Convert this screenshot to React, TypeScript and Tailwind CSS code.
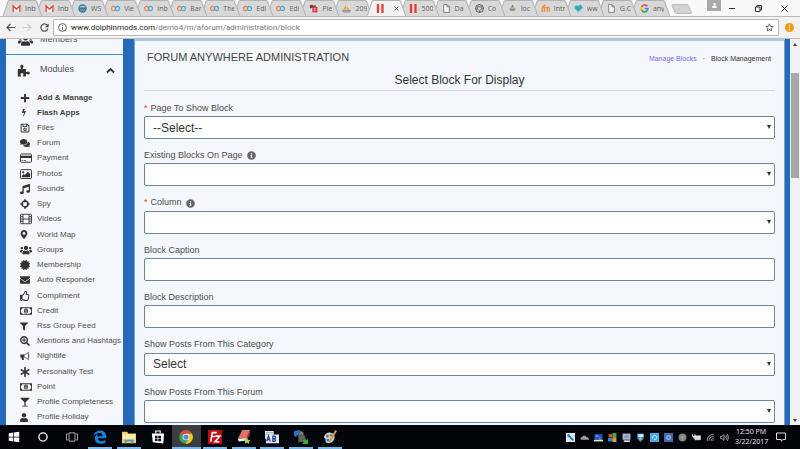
import React from "react";
import {
  FaPlus,
  FaRegSave,
  FaComments,
  FaMusic,
  FaMapMarkerAlt,
  FaUsers,
  FaCertificate,
  FaEnvelope,
  FaRegThumbsUp,
  FaFilter,
  FaSearchPlus,
  FaAsterisk,
  FaUser,
  FaInfoCircle,
} from "react-icons/fa";

type IconProps = { className?: string };

/* ---------- sidebar icons ---------- */

const Puzzle = ({ className }: IconProps) => (
  <svg viewBox="0 0 16 16" className={className} fill="currentColor" aria-hidden="true">
    <path d="M1 6h3.6c.6 0 .5-.5.2-1-.5-.8-.8-1.300-.8-2C4 1.700 4.900 1 6 1s2 .8 2 2c0 .7-.3 1.200-.7 1.900-.4.600-.4 1.100.3 1.100H11v3.300c0 .8.6.8 1.200.4.600-.4 1-.6 1.700-.6 1.200 0 1.900.9 1.900 1.900s-.8 1.900-1.900 1.900c-.7 0-1.200-.3-1.700-.6-.6-.4-1.200-.4-1.200.4V15.500H7.800c-.9 0-.7-.6-.3-1.200.3-.4.500-.8.5-1.300 0-1-.8-1.600-1.900-1.600s-1.900.6-1.900 1.600c0 .5.200.9.500 1.300.4.600.5 1.200-.4 1.200H1z" />
  </svg>
);

const Bolt = ({ className }: IconProps) => (
  <svg viewBox="0 0 1792 1792" className={className} fill="currentColor" aria-hidden="true">
    <path d="M1333 566q18 20 7 44l-540 1157q-13 25-42 25-4 0-14-2-17-5-25.500-19t-4.500-30l197-808-406 101q-4 1-12 1-18 0-31-11-18-15-13-39l201-825q4-14 16-23t28-9h328q19 0 32 12.500t13 29.500q0 8-5 18l-171 443 396-98q8-2 12-2 19 0 34 15z" />
  </svg>
);

const Card = ({ className }: IconProps) => (
  <svg viewBox="0 0 16 16" className={className} aria-hidden="true">
    <rect x="0.700" y="2.700" width="14.600" height="11" rx="1.200" fill="none" stroke="currentColor" strokeWidth="1.300" />
    <path d="M0.500 5h15v3h-15zM2 11h2v1H2zM5 11h3v1H5z" fill="currentColor" />
  </svg>
);

const Picture = ({ className }: IconProps) => (
  <svg viewBox="0 0 16 16" className={className} aria-hidden="true">
    <rect x="0.700" y="2.200" width="14.600" height="11.800" rx="1" fill="none" stroke="currentColor" strokeWidth="1.300" />
    <circle cx="4.300" cy="5.800" r="1.500" fill="currentColor" />
    <path d="M2.500 12.200v-2L5 8l1.400 1.300L10.500 5l3 3v4.200z" fill="currentColor" />
  </svg>
);

const Crosshair = ({ className }: IconProps) => (
  <svg viewBox="0 0 16 16" className={className} fill="none" stroke="currentColor" aria-hidden="true">
    <circle cx="8" cy="8" r="4.700" strokeWidth="2.400" />
    <path d="M8 .5v4.500M8 11v4.500M.5 8h4.500M11 8h4.500" strokeWidth="2.600" />
  </svg>
);

const Film = ({ className }: IconProps) => (
  <svg viewBox="0 0 16 16" className={className} fill="none" stroke="currentColor" strokeWidth="1.200" aria-hidden="true">
    <rect x="0.700" y="1.700" width="14.600" height="12.600" rx="1" />
    <path d="M4 1.700v12.600M12 1.700v12.600M4 8h8M.7 5H4M.7 8H4M.7 11H4M12 5h3.300M12 8h3.300M12 11h3.300" />
  </svg>
);

const Money = ({ className }: IconProps) => (
  <svg viewBox="0 0 16 16" className={className} aria-hidden="true">
    <path
      fill="currentColor"
      fillRule="evenodd"
      d="M0 3h16v10H0zM3 4.200A2 2 0 0 1 1.200 6v4A2 2 0 0 1 3 11.800h10A2 2 0 0 1 14.800 10V6A2 2 0 0 1 13 4.200z"
    />
    <ellipse cx="8" cy="8" rx="2.700" ry="3.200" fill="currentColor" />
    <path d="M7.200 6.900l1-.7v3.300M7 9.700h2.300" stroke="#f4f8fd" strokeWidth="0.800" fill="none" />
  </svg>
);

const Bullhorn = ({ className }: IconProps) => (
  <svg viewBox="0 0 16 16" className={className} aria-hidden="true">
    <path d="M0.500 5.500h6.700v5H5.600c-.2 1.300.6 2.200 1.200 3.200-.8 1-2.900 1-3.700.1C2.700 12.500 2.200 11.500 2.500 10.500h-2z" fill="currentColor" />
    <path d="M7.200 5.600C10 5.300 12 3.600 13.500 2.200v11.600c-1.500-1.400-3.500-3.100-6.300-3.400" fill="none" stroke="currentColor" strokeWidth="1.200" />
    <path d="M13.500 6.300c2 0 2 3.400 0 3.400" fill="currentColor" />
  </svg>
);

const Glass = ({ className }: IconProps) => (
  <svg viewBox="0 0 16 16" className={className} fill="currentColor" aria-hidden="true">
    <path d="M1 1h14v1.200L9 8.500v5.300h3.500V15h-9v-1.200H7V8.500L1 2.200z" />
  </svg>
);

const modules = [
  { name: "Add & Manage", Icon: FaPlus, bold: true },
  { name: "Flash Apps", Icon: Bolt, bold: true, narrow: true },
  { name: "Files", Icon: FaRegSave },
  { name: "Forum", Icon: FaComments },
  { name: "Payment", Icon: Card, wide: true },
  { name: "Photos", Icon: Picture, wide: true },
  { name: "Sounds", Icon: FaMusic },
  { name: "Spy", Icon: Crosshair },
  { name: "Videos", Icon: Film, wide: true },
  { name: "World Map", Icon: FaMapMarkerAlt, narrow: true },
  { name: "Groups", Icon: FaUsers, wide: true },
  { name: "Membership", Icon: FaCertificate },
  { name: "Auto Responder", Icon: FaEnvelope },
  { name: "Compliment", Icon: FaRegThumbsUp },
  { name: "Credit", Icon: Money, wide: true },
  { name: "Rss Group Feed", Icon: FaFilter, narrow: true },
  { name: "Mentions and Hashtags", Icon: FaSearchPlus },
  { name: "Nightlife", Icon: Bullhorn },
  { name: "Personality Test", Icon: FaAsterisk },
  { name: "Point", Icon: Money, wide: true },
  { name: "Profile Completeness", Icon: Glass },
  { name: "Profile Holiday", Icon: FaUser, narrow: true },
];

const fields = [
  { id: "page", label: "Page To Show Block", required: true, options: ["--Select--"] },
  { id: "existing", label: "Existing Blocks On Page", info: true, options: [""] },
  { id: "column", label: "Column", required: true, info: true, options: [""] },
  { id: "caption", label: "Block Caption" },
  { id: "description", label: "Block Description" },
  { id: "category", label: "Show Posts From This Category", options: ["Select"] },
  { id: "forum", label: "Show Posts From This Forum", options: [""] },
];

/* ---------- browser tabs ---------- */

const favicons: Record<string, React.ReactNode> = {
  gmail: (
    <>
      <path d="M1 3h14v11H1z" fill="#f5f2f1" />
      <path d="M2 14V3.500l6 5.500 6-5.500V14" fill="none" stroke="#db4437" strokeWidth="2.400" />
    </>
  ),
  wordpress: (
    <>
      <circle cx="8" cy="8" r="7.500" fill="#3f7695" />
      <path d="M2 5q6-4 12 0l-2 1H4z" fill="#a9c6d3" />
      <path d="M4 9l2 4 2-4 2 4 2-4" fill="none" stroke="#8fb5c6" />
    </>
  ),
  loops: (
    <>
      <ellipse cx="4.500" cy="8" rx="3.500" ry="3.700" fill="none" stroke="#ef8152" strokeWidth="2" />
      <ellipse cx="11.500" cy="8" rx="3.500" ry="3.700" fill="none" stroke="#45a9dc" strokeWidth="2" />
    </>
  ),
  plesk: (
    <>
      <path d="M6 5h9v10H6z" fill="#e0303c" />
      <path d="M1 3l4-2 3 2 4-1v3L7 6 2 8z" fill="#8d2d33" />
      <path d="M8 8h5M8 11h5M10 6v8" stroke="#f7c6c8" />
    </>
  ),
  boat: (
    <>
      <path d="M7 1l1 9H2zM9 4l5 7H9z" fill="#f0a03a" />
      <path d="M0 12h16M2 14h12" stroke="#6080a5" strokeWidth="1.500" />
    </>
  ),
  bars: <path d="M1.500 0h4v16h-4zM9.500 0h4v16h-4z" fill="#e93a35" />,
  file: <path d="M3 1h6l4 4v10H3zM9 1v4h4" fill="#f3f3f3" stroke="#666" strokeWidth="1.300" />,
  globe: (
    <>
      <circle cx="8" cy="8" r="7" fill="none" stroke="#4c4c4c" strokeWidth="1.600" />
      <path d="M5 5h6l1 4-4 3-4-3zM5 5L3 3M11 5l2-2M8 12v3M1 8l3 1M15 8l-3 1" fill="none" stroke="#4c4c4c" strokeWidth="1.200" />
    </>
  ),
  joomla: (
    <>
      <path d="M8 1l3 5H5zM2 8h12l-3 4H5z" fill="#777" />
      <path d="M5 9h6l-3 4z" fill="#c19a5a" />
    </>
  ),
  moodle: <path d="M2 14V8q0-2 2-2t2 2v6M6 9q0-3 2.500-3T11 9v5M11 9q0-3 2-3t2 3v5M2 5l6-3" fill="none" stroke="#ef8b37" strokeWidth="2.200" />,
  dolphin: <path d="M1 5l3-3 4 1 4-2 3 4-1 4-3 1 1 3-3-1-2 3-2-4-4-2z" fill="#35a6bd" stroke="#7fd0df" />,
  google: (
    <g fill="none" strokeWidth="2.800">
      <path d="M13 4A6 6 0 0 0 2.800 5" stroke="#ea4335" />
      <path d="M2.800 5a6 6 0 0 0 0 6" stroke="#fbbc05" />
      <path d="M2.800 11a6 6 0 0 0 9.400 1.300" stroke="#34a853" />
      <path d="M12.200 12.300A6 6 0 0 0 14 8H8.500" stroke="#4285f4" />
    </g>
  ),
};

const tabs = [
  ["gmail", "Inb"],
  ["gmail", "Inb"],
  ["wordpress", "WS"],
  ["loops", "Vie"],
  ["loops", "Inb"],
  ["loops", "Bar"],
  ["loops", "The"],
  ["loops", "Edi"],
  ["loops", "Edi"],
  ["plesk", "Ple"],
  ["boat", "209"],
  ["bars", "", "active"],
  ["bars", "500"],
  ["file", "Da"],
  ["globe", "Co"],
  ["joomla", "loc"],
  ["moodle", "Intr"],
  ["dolphin", "ww"],
  ["file", "G.C"],
  ["google", "any"],
];

const TabStrip = () => (
  <div className="flex h-4 shrink-0 bg-[#f8f8f8] pl-[3px]">
    <div className="flex min-w-0 flex-1">
      {tabs.map(([icon, title, active], i) => (
        <button
          key={i}
          aria-label={title || "Forum"}
          className="relative flex min-w-0 flex-1 items-center pl-2"
          style={{ zIndex: active ? 30 : tabs.length - i }}
        >
          <svg
            viewBox="0 0 39 16"
            preserveAspectRatio="none"
            className="absolute inset-y-0 left-0 -z-10 h-4 w-[calc(100%+6px)]"
            aria-hidden="true"
          >
            <path
              d="M0 16.500L5 1.500Q5.500.5 6.500.5H32Q33 .5 33.500 1.500L39 16.500"
              fill={active ? "#f2f2f2" : "#d8d8d8"}
              stroke="#b3b3b3"
            />
          </svg>
          <svg viewBox="0 0 16 16" className="ml-px h-[9px] w-[9px] shrink-0" aria-hidden="true">
            {favicons[icon]}
          </svg>
          {active ? (
            <svg viewBox="0 0 8 8" className="ml-[9px] h-[5px] w-[5px] shrink-0" aria-hidden="true">
              <path d="M1 1l6 6M7 1L1 7" stroke="#444" strokeWidth="1.600" />
            </svg>
          ) : (
            <span className="ml-1 truncate text-clip text-[7px] leading-none text-[#606060]">{title}</span>
          )}
        </button>
      ))}
    </div>
    <div className="flex w-[136px] shrink-0 items-start">
      <button aria-label="New tab" className="mt-1 ml-[7px] h-[10px] w-[21px]">
        <svg viewBox="0 0 21 10" className="h-full w-full">
          <path d="M1.500.5h14.500q1 0 1.500 1l3 7q.2 1-1 1H6q-1.500 0-2-1l-3-7q-.2-1 .5-1z" fill="#d2d2d2" stroke="#bcbcbc" />
        </svg>
      </button>
      <button aria-label="Profile" className="ml-[15px] flex h-[11px] w-[14px] items-center justify-center bg-[#a9a9a9] text-white">
        <FaUser className="h-[5px] w-[5px]" />
      </button>
      <div className="flex h-full flex-1 items-center justify-between pr-3 pl-2">
        <button aria-label="Minimize">
          <svg viewBox="0 0 6 6" className="h-[6px] w-[6px]">
            <path d="M0 3.500h6" stroke="#333" />
          </svg>
        </button>
        <button aria-label="Restore">
          <svg viewBox="0 0 7 7" className="h-[7px] w-[7px]" fill="none" stroke="#333">
            <path d="M.5 2h4.500v4.500H.5zM2 2V.5h4.500V5H5" />
          </svg>
        </button>
        <button aria-label="Close">
          <svg viewBox="0 0 7 7" className="h-[7px] w-[7px]">
            <path d="M.5.5l6 6M6.500.5l-6 6" stroke="#222" />
          </svg>
        </button>
      </div>
    </div>
  </div>
);

const Toolbar = () => (
  <div className="relative z-40 flex h-[23px] shrink-0 items-center border-t border-b border-t-[#b9b9b9] border-b-[#bdbdbd] bg-[#f2f2f2] pr-[6px] pl-[6px]">
    <div className="flex items-center gap-2">
      <button aria-label="Back">
        <svg viewBox="0 0 9 9" className="h-[9px] w-[9px]" fill="none" stroke="#505050" strokeWidth="1.200">
          <path d="M9 4.500H1M4.500 1L1 4.500 4.500 8" />
        </svg>
      </button>
      <button aria-label="Forward">
        <svg viewBox="0 0 9 9" className="h-[9px] w-[9px]" fill="none" stroke="#cdcdcd" strokeWidth="1.200">
          <path d="M0 4.500h8M4.500 1L8 4.500 4.500 8" />
        </svg>
      </button>
      <button aria-label="Reload">
        <svg viewBox="0 0 9 9" className="h-[9px] w-[9px]">
          <path d="M7.600 2.700A3.600 3.600 0 1 0 8 5.500" fill="none" stroke="#505050" strokeWidth="1.200" />
          <path d="M8.600.6v3.600H5z" fill="#505050" />
        </svg>
      </button>
    </div>
    <div className="ml-1 flex h-[17px] flex-1 items-center rounded-[1px] border border-[#b9b9b9] bg-white pr-1 pl-1">
      <svg viewBox="0 0 9 9" className="h-[9px] w-[9px]" aria-hidden="true">
        <circle cx="4.500" cy="4.500" r="3.900" fill="none" stroke="#5c5c5c" />
        <path d="M4.500 4v2.800M4.500 2.200v1" stroke="#5c5c5c" />
      </svg>
      <a href="#" className="ml-1 flex-1 font-[Roboto,sans-serif] text-[8px] leading-none text-[#777]">
        <span className="text-[#222]">www.dolphinmods.com</span>/demo4/m/aforum/administration/block
      </a>
      <button aria-label="Bookmark">
        <svg viewBox="0 0 16 16" className="h-[9px] w-[9px]" fill="none" stroke="#555" strokeWidth="1.600">
          <path d="M8 1.500l1.900 4.400 4.700.4-3.600 3.100 1.100 4.700L8 11.600l-4.100 2.500L5 9.400 1.400 6.300l4.700-.4z" />
        </svg>
      </button>
    </div>
    <button aria-label="Update browser" className="ml-[6px]">
      <svg viewBox="0 0 9 9" className="h-[9px] w-[9px]">
        <circle cx="4.500" cy="4.500" r="4.500" fill="#f39a0b" />
        <path d="M4.500 1.800v3.400M4.500 6v1.200" stroke="#fff" strokeWidth="1.100" />
      </svg>
    </button>
  </div>
);

const Sidebar = () => (
  <aside className="flex w-[117px] shrink-0 flex-col bg-[#f4f8fd] text-[#505050]">
    <a href="#" className="-mt-2 flex h-6 shrink-0 items-center border-b border-[#4a86cc] pb-[5px] pl-3 text-[9px]">
      <FaUsers className="h-[13px] w-[15px] text-[#333]" />
      <span className="ml-[7px]">Members</span>
    </a>
    <button className="flex h-[30px] shrink-0 items-center pr-2 pl-[11px] text-[9px]">
      <Puzzle className="h-[13px] w-[13px] text-[#333]" />
      <span className="ml-[10px] flex-1 text-left">Modules</span>
      <svg viewBox="0 0 9 9" className="h-[9px] w-[9px]" aria-hidden="true">
        <path d="M1 6.500L4.500 3 8 6.500" fill="none" stroke="#333" strokeWidth="1.800" />
      </svg>
    </button>
    <ul className="mt-[5px] flex flex-1 flex-col justify-between">
      {modules.map(({ name, Icon, bold, wide, narrow }) => (
        <li key={name}>
          <a href="#" className="flex h-[15px] items-center pl-[14px] text-[8px] leading-none whitespace-nowrap">
            <span className={`flex shrink-0 text-[#333] ${wide ? "w-[12px]" : "w-[10px]"}`}>
              <Icon className={wide ? "h-[12px] w-[12px]" : narrow ? "h-[9px] w-[8px]" : "h-[10px] w-[10px]"} />
            </span>
            <span className={`${wide ? "ml-[5px]" : "ml-[7px]"} ${bold ? "font-bold text-[#444]" : ""}`}>{name}</span>
          </a>
        </li>
      ))}
    </ul>
  </aside>
);

const boxStyle = "block h-[23px] w-full appearance-none rounded-[2px] border border-[#6f849d] bg-white px-2 text-[12px] leading-none text-[#333]";

const BlockForm = () => (
  <form className="flex flex-1 flex-col justify-between pt-[10px] pb-[2px]">
    {fields.map(({ id, label, required, info, options }) => (
      <div key={id}>
        <label htmlFor={id} className="flex h-[15px] items-center text-[9px] text-[#4c4c4c]">
          {required && <span className="mr-[3px] text-[#e2383f]">*</span>}
          {label}
          {info && <FaInfoCircle className="ml-1 h-[9px] w-[9px] text-[#666]" />}
        </label>
        {options ? (
          <div className="relative">
            <select id={id} className={boxStyle}>
              {options.map((o) => (
                <option key={o}>{o}</option>
              ))}
            </select>
            <svg viewBox="0 0 4 4" className="pointer-events-none absolute top-[9px] right-[4px] h-1 w-1" aria-hidden="true">
              <path d="M0 0h4L2 4z" fill="#333" />
            </svg>
          </div>
        ) : (
          <input id={id} type="text" className={boxStyle} />
        )}
      </div>
    ))}
  </form>
);

const Scrollbar = () => (
  <div className="flex w-[10px] shrink-0 flex-col items-center bg-[#f1f1f1]" aria-hidden="true">
    <svg viewBox="0 0 4 3" className="mt-1 h-[3px] w-1">
      <path d="M0 3h4L2 0z" fill="#444" />
    </svg>
    <div className="mt-[27px] h-[105px] w-2 bg-[#a8a8a8]" />
    <svg viewBox="0 0 4 3" className="mt-auto mb-[3px] h-[3px] w-1">
      <path d="M0 0h4L2 3z" fill="#444" />
    </svg>
  </div>
);

/* ---------- taskbar ---------- */

const apps = [
  {
    name: "Start",
    art: <path d="M1 3l6-1v5.600H1zM8 1.900L15 1v6.600H8zM1 8.500h6V14l-6-1zM8 8.500h7V15l-7-1z" fill="#fff" />,
  },
  { name: "Cortana", art: <circle cx="8" cy="8" r="5.500" fill="none" stroke="#fff" strokeWidth="1.700" /> },
  {
    name: "Task View",
    art: <path d="M4 2.500h8v11H4zM2.500 4H.5v8h2M13.500 4h2v8h-2" fill="none" stroke="#ccc" strokeWidth="1.100" />,
  },
  {
    name: "Edge",
    open: true,
    art: (
      <path
        d="M.5 7.300C1.200 3 4.300.5 8 .5c4.500 0 7.200 3.300 7.200 7.200v1.700H5.600c.2 2.300 2.200 3.200 4.200 3.200 1.700 0 3.200-.5 4.400-1.200v3.200c-1.400.8-3.100 1.200-5 1.200-4.300 0-7-2.400-7-6.100 0-2.200 1.200-4.200 3.400-5.300-.6.800-.9 1.600-1 2.600h6.200C10.800 4.800 9.700 3.500 7.500 3.500 4.700 3.500 2.100 5 .5 7.300z"
        fill="#1581db"
      />
    ),
  },
  {
    name: "File Explorer",
    open: true,
    art: (
      <>
        <path d="M0 2h6l1 2h9v11H0z" fill="#f4cf68" />
        <path d="M1 5h14v5H1z" fill="#fdeeb4" />
        <path d="M3 15v-4h10v4h-2.500v-2h-5v2z" fill="#4a9dd4" />
      </>
    ),
  },
  {
    name: "Store",
    art: (
      <>
        <path d="M1 4h14l-1 11.500L2 14z" fill="#fff" />
        <path d="M5.500 4V1.200h5V4" fill="none" stroke="#fff" strokeWidth="1.300" />
        <path d="M4.500 6.500h3v2.800h-3zM8.300 6.500h3.200v2.800H8.300zM4.500 10h3v2.600h-3zM8.300 10h3.200v2.800H8.300z" fill="#111" />
      </>
    ),
  },
  {
    name: "Chrome",
    open: true,
    active: true,
    art: (
      <>
        <circle cx="8" cy="8" r="7.800" fill="#3aa757" />
        <path d="M8 8L1.200 4.200A7.800 7.800 0 0 1 14.800 4.200H8z" fill="#e0463a" />
        <path d="M8 4.200h6.800A7.800 7.800 0 0 1 7.600 15.800L11.500 9z" fill="#fbc820" />
        <circle cx="8" cy="8" r="3.800" fill="#fff" />
        <circle cx="8" cy="8" r="3" fill="#4a8af4" />
      </>
    ),
  },
  {
    name: "FileZilla",
    open: true,
    art: (
      <>
        <path d="M0 0h16v16H0z" fill="#bf0d0d" />
        <path d="M3 13.500L5 3h5M4.200 7.500h4M8.500 7h5l-5.500 6.500h5" fill="none" stroke="#fff" strokeWidth="1.800" />
      </>
    ),
  },
  {
    name: "Notes",
    open: true,
    art: (
      <>
        <path d="M6 0h9l-4 9-10 1z" fill="#e4706b" />
        <path d="M1 10l10-1v3l-9 1z" fill="#eee" />
        <path d="M11 9l4-9v4l-3 7z" fill="#b53535" />
        <path d="M11.500 8.500l1 2.500 3 .5-2 1.800.5 2.700-2.500-1.500L9 15.500l.5-2.500-2-2 3-.3z" fill="#b5d335" />
      </>
    ),
  },
  {
    name: "Translator",
    open: true,
    art: (
      <>
        <path d="M0 1h10v9H0zM6 5h10v10H6zM1 7h6v8H1z" fill="#dfe3ea" />
        <path d="M1 3h8M1 5h4" stroke="#89a8ca" />
        <path d="M2 13l2-6 2 6M3 11h2M9 7v6h2q2-1.500 0-3H9h2q2-1.500 0-3z" fill="none" stroke="#27468e" strokeWidth="1.500" />
      </>
    ),
  },
  {
    name: "Remote Access",
    open: true,
    art: (
      <>
        <path d="M0 1l7-1v6L5 5 2 8 0 6z" fill="#2675d4" />
        <path d="M5 6V3q3-4 6 0v3l2 1v6l-8 1z" fill="#5d6163" />
        <path d="M6.500 5q2-4 3.500 0" fill="none" stroke="#aaa" />
        <path d="M16 16H9l2-2-1-2 3-2 1 2 2-2z" fill="#2bb53c" />
      </>
    ),
  },
  {
    name: "Paint",
    open: true,
    art: (
      <>
        <path d="M1 8Q3 2 9 3q5 1 4 6t-6 6q-5 0-4-4z" fill="#b8d9ec" />
        <circle cx="5" cy="7" r="1.500" fill="#d84a3b" />
        <circle cx="9" cy="6" r="1.400" fill="#4ba84a" />
        <circle cx="5.500" cy="11.500" r="1.500" fill="#3677c2" />
        <path d="M7 14L15 .5" stroke="#e09136" strokeWidth="2.200" />
      </>
    ),
  },
];

const tray = [
  <><path d="M0 0h16v16H0z" fill="#d5e9f8" /><path d="M3 3l10 10M3 6l3-3" stroke="#2676b8" strokeWidth="3" /></>,
  <path d="M2 12q-3-4 2-5 3-5 7 0 5 0 5 5z" fill="#9a9d9f" />,
  <><path d="M1 2h14v10H1z" fill="#2b4ad2" /><path d="M3 4h5v3H3z" fill="#35b6e8" /><path d="M0 12h16v3H0z" fill="#ddd" /><path d="M9 8h3v4H9z" fill="#41b748" /></>,
  <><path d="M1 2h7v6H1z" fill="#da5233" /><path d="M8 0h7v9H8z" fill="#54a04b" /><path d="M0 9h8v6H0z" fill="#3987cd" /><path d="M8 9h7v7H8z" fill="#d8a634" /></>,
  <><path d="M1 1h14v11H1z" fill="#aeb8cd" /><path d="M3 13h11v3H3z" fill="#dedede" /><path d="M4 4h8v5H4z" fill="#8998b4" /></>,
  <><path d="M2 1h12v8q-2 5-6 7-4-2-6-7z" fill="#2586d2" /><path d="M4 2h9v5H4z" fill="#dbe9f3" /><path d="M6 8h4v4H6z" fill="#ecc440" /></>,
  <><path d="M0 0h16v16H0z" fill="#46aae3" /><path d="M4 10q0-6 4-6t4 4-5 4" fill="none" stroke="#c9ecfa" strokeWidth="1.500" /></>,
  <><path d="M0 0h16v16H0z" fill="#4567ae" /><circle cx="8" cy="8" r="4.500" fill="#96afd9" /><circle cx="8" cy="8" r="2" fill="#47639b" /></>,
  <><circle cx="8" cy="8" r="7" fill="#838383" /><path d="M4 5l4 2 4-2M8 7v6" stroke="#bbb" fill="none" /></>,
  <><path d="M5 5h10v7H5z" fill="#ddd" stroke="#fff" /><path d="M1 2v4h4V2M3 6v3h2" stroke="#fff" fill="none" strokeWidth="1.500" /></>,
  <path d="M2 14Q2 4 14 2M5.500 14Q5 7 14 6M9 14q0-4 5-4.500M12 14l2-2" fill="none" stroke="#ccc" strokeWidth="1.300" />,
  <path d="M1 6h2l4-3v10l-4-3H1zM9 6q2 2 0 4M11 4q3.500 4 0 8M13 2q5 6 0 12" fill="none" stroke="#ccc" strokeWidth="1.300" />,
];

const Taskbar = () => (
  <footer className="flex h-6 shrink-0 items-stretch justify-between bg-[#02050a]">
    <div className="grid w-[344px] grid-cols-12">
      {apps.map(({ name, art, open, active }) => (
        <button
          key={name}
          aria-label={name}
          className={`flex flex-col items-center justify-between pt-[5px] ${active ? "bg-[#3b3d41]" : ""}`}
        >
          <svg viewBox="0 0 16 16" className={open || name === "Store" ? "h-[14px] w-[14px]" : "mt-px h-[12px] w-[12px]"}>
            {art}
          </svg>
          {open && <span className={`h-[2px] bg-[#76b9ed] ${active ? "w-full" : "w-6"}`} />}
        </button>
      ))}
    </div>
    <div className="flex items-center pr-[14px]">
      <div className="flex gap-[5px]">
        {tray.map((art, i) => (
          <svg key={i} viewBox="0 0 16 16" className="h-[9px] w-[9px]" aria-hidden="true">
            {art}
          </svg>
        ))}
      </div>
      <div className="ml-[6px] w-8 text-center text-[7px] leading-[10px] whitespace-nowrap text-[#eee]">
        <div>12:50 PM</div>
        <div>3/22/2017</div>
      </div>
      <button aria-label="Notifications" className="ml-[9px]">
        <svg viewBox="0 0 10 10" className="h-[10px] w-[10px]">
          <path d="M.5 1h9v6.500H7L5.200 9.300V7.500H.5z" fill="none" stroke="#ddd" />
        </svg>
      </button>
    </div>
  </footer>
);

const App = () => {
  return (
    <div className="flex h-screen flex-col overflow-hidden font-['Open_Sans',sans-serif]">
      <TabStrip />
      <Toolbar />
      <div className="flex min-h-0 flex-1 overflow-hidden bg-[#2569ba] font-['Liberation_Sans',Arial,sans-serif]">
        <div className="flex min-w-0 flex-1 pr-[5px] pl-[6px]">
          <Sidebar />
          <main className="ml-[11px] flex min-w-0 flex-1 flex-col border-x border-t-2 border-x-[#6ea3dd] border-t-[#a5c9ee] bg-[#f4f8fd] px-[9px]">
            <header className="flex h-[33px] shrink-0 items-center justify-between pr-1 pl-[3px]">
              <h1 className="text-[11px] text-[#444]">FORUM ANYWHERE ADMINISTRATION</h1>
              <nav className="mt-1 flex gap-[6px] text-[7px] text-[#333]">
                <a href="#" className="text-[#7b68ee]">Manage Blocks</a>
                <span>·</span>
                <span>Block Management</span>
              </nav>
            </header>
            <h2 className="h-[17px] shrink-0 border-b border-[#d3d8dc] text-center text-[12px] leading-none text-[#333]">
              Select Block For Display
            </h2>
            <BlockForm />
          </main>
        </div>
        <Scrollbar />
      </div>
      <Taskbar />
    </div>
  );
};

export default App;
